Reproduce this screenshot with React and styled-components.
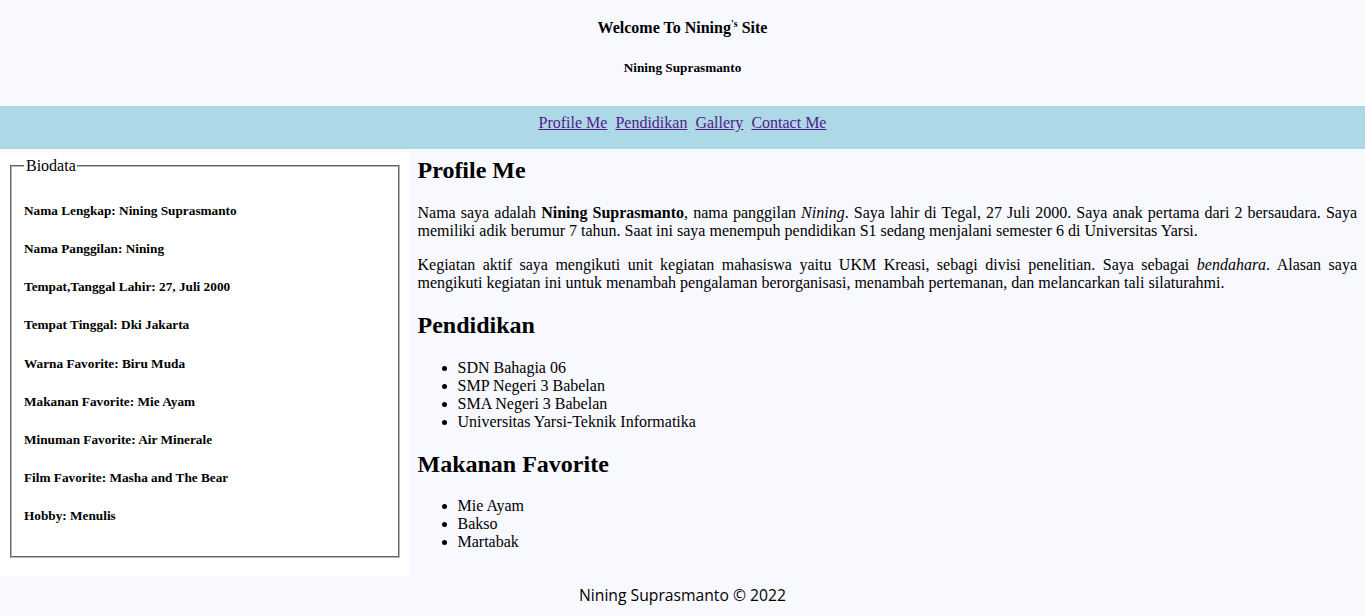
import React from "react";
import styled, { createGlobalStyle } from "styled-components";

const GlobalStyle = createGlobalStyle`
  body {
    margin: 0;
    background: ghostwhite;
    font-family: "Liberation Serif", "Times New Roman", serif;
    font-size: 16px;
    color: #000;
  }
`;

const Header = styled.header`
  display: flow-root;
  background: ghostwhite;
  text-align: center;
  padding: 19px 0 31px;
`;

const Title = styled.h3`
  font-size: 16px;
  margin: 0;
  line-height: 18px;

  sup {
    font-size: 10px;
    line-height: 0;
  }
`;

const SubTitle = styled.h5`
  font-size: 13.28px;
  margin: 23px 0 0;
  line-height: 15px;
`;

const Nav = styled.nav`
  background: lightblue;
  text-align: center;
  padding: 8px 0 17px;
  line-height: 18px;
`;

const NavLink = styled.a`
  color: #551a8b;
  text-decoration: underline;
  margin: 0 2px;
`;

const Body = styled.div`
  display: flex;
`;

const Aside = styled.aside`
  width: 30%;
  padding: 8px;
  box-sizing: border-box;
  background: #fff;
  flex-shrink: 0;
`;

const Fieldset = styled.fieldset`
  margin: 0 2px;
  padding: 5.6px 12px 10px;
  border: 2px groove #b8b8b8;

  legend {
    padding: 0 1px 0 2px;
    font-size: 16px;
  }
`;

const BioItem = styled.h5`
  font-size: 13.28px;
  margin: 22.2px 0;
`;

const Main = styled.main`
  flex: 1;
  background: ghostwhite;
  padding: 8px 8px 9px;
`;

const Heading = styled.h2`
  font-size: 24px;
  margin: ${(p) => (p.$first ? "0" : "19.9px")} 0 19.9px;
  line-height: 27px;
`;

const Para = styled.p`
  text-align: justify;
  margin: 16px 0;
  line-height: 18px;
`;

const List = styled.ul`
  margin: 17px 0 16px;
  padding-left: 40px;
  line-height: 18px;
`;

const Footer = styled.footer`
  background: ghostwhite;
  text-align: center;
  padding: 9px 0 11px;
  font-family: "Open Sans", "Noto Sans", sans-serif;
  font-size: 15.7px;
  line-height: 20px;
`;

const bio = [
  "Nama Lengkap: Nining Suprasmanto",
  "Nama Panggilan: Nining",
  "Tempat,Tanggal Lahir: 27, Juli 2000",
  "Tempat Tinggal: Dki Jakarta",
  "Warna Favorite: Biru Muda",
  "Makanan Favorite: Mie Ayam",
  "Minuman Favorite: Air Minerale",
  "Film Favorite: Masha and The Bear",
  "Hobby: Menulis",
];

const pendidikan = [
  "SDN Bahagia 06",
  "SMP Negeri 3 Babelan",
  "SMA Negeri 3 Babelan",
  "Universitas Yarsi-Teknik Informatika",
];

const makanan = ["Mie Ayam", "Bakso", "Martabak"];

const App = () => {
  return (
    <>
      <GlobalStyle />
      <Header>
        <Title>
          Welcome To Nining<sup>'s</sup> Site
        </Title>
        <SubTitle>Nining Suprasmanto</SubTitle>
      </Header>
      <Nav>
        <NavLink href="#profile">Profile Me</NavLink>{" "}
        <NavLink href="#pendidikan">Pendidikan</NavLink>{" "}
        <NavLink href="#gallery">Gallery</NavLink>{" "}
        <NavLink href="#contact">Contact Me</NavLink>
      </Nav>
      <Body>
        <Aside>
          <Fieldset>
            <legend>Biodata</legend>
            {bio.map((b) => (
              <BioItem key={b}>{b}</BioItem>
            ))}
          </Fieldset>
        </Aside>
        <Main>
          <Heading $first>Profile Me</Heading>
          <Para>
            Nama saya adalah <b>Nining Suprasmanto</b>, nama panggilan{" "}
            <i>Nining</i>. Saya lahir di Tegal, 27 Juli 2000. Saya anak pertama
            dari 2 bersaudara. Saya memiliki adik berumur 7 tahun. Saat ini saya
            menempuh pendidikan S1 sedang menjalani semester 6 di Universitas
            Yarsi.
          </Para>
          <Para>
            Kegiatan aktif saya mengikuti unit kegiatan mahasiswa yaitu UKM
            Kreasi, sebagi divisi penelitian. Saya sebagai <i>bendahara</i>.
            Alasan saya mengikuti kegiatan ini untuk menambah pengalaman
            berorganisasi, menambah pertemanan, dan melancarkan tali
            silaturahmi.
          </Para>
          <Heading>Pendidikan</Heading>
          <List>
            {pendidikan.map((p) => (
              <li key={p}>{p}</li>
            ))}
          </List>
          <Heading>Makanan Favorite</Heading>
          <List>
            {makanan.map((m) => (
              <li key={m}>{m}</li>
            ))}
          </List>
        </Main>
      </Body>
      <Footer>Nining Suprasmanto © 2022</Footer>
    </>
  );
};

export default App;
